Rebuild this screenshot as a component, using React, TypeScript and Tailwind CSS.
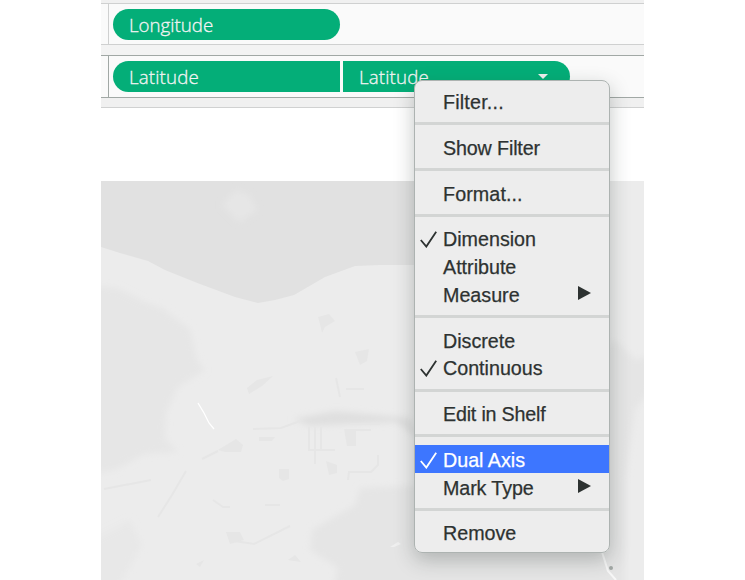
type Item = {
  label: string;
  tracking?: string;
  checked?: boolean;
  submenu?: boolean;
  active?: boolean;
};

const groups: Item[][] = [
  [{ label: 'Filter...', tracking: 'tracking-[0.2px]' }],
  [{ label: 'Show Filter', tracking: 'tracking-[-0.14px]' }],
  [{ label: 'Format...', tracking: 'tracking-[0.1px]' }],
  [
    { label: 'Dimension', checked: true },
    { label: 'Attribute' },
    { label: 'Measure', submenu: true },
  ],
  [{ label: 'Discrete' }, { label: 'Continuous', checked: true }],
  [{ label: 'Edit in Shelf', tracking: 'tracking-[-0.2px]' }],
  [
    { label: 'Dual Axis', checked: true, active: true },
    { label: 'Mark Type', tracking: 'tracking-[-0.1px]', submenu: true },
  ],
  [{ label: 'Remove' }],
];

function MenuRow({ item }: { item: Item }) {
  return (
    <div
      className={`flex h-[27.6px] items-center pl-[5px] pr-[18px] ${
        item.active ? 'bg-[#3d76ff] text-white' : 'text-[#2d3231]'
      }`}
    >
      <div className="w-[23px] shrink-0">
        {item.checked && (
          <svg width="17" height="17" viewBox="0 0 17 17" fill="none" className="mt-[3px]">
            <path d="M0.8 9 L6.3 15.6 L16.2 0.8" stroke="currentColor" strokeWidth="1.8" />
          </svg>
        )}
      </div>
      <span
        className={`grow whitespace-nowrap pt-[3px] text-[19.7px] leading-[27px] [-webkit-text-stroke:0.25px_currentColor] ${item.tracking ?? ''}`}
      >
        {item.label}
      </span>
      {item.submenu && (
        <svg width="13" height="14" viewBox="0 0 13 14" className="mb-px shrink-0">
          <path d="M0 0 L13 7 L0 14 Z" fill="currentColor" />
        </svg>
      )}
    </div>
  );
}

function ContextMenu() {
  return (
    <div className="absolute left-[414px] top-[80px] h-[473px] w-[196px] overflow-hidden rounded-[8px] border border-[#adb3b1] bg-[#ededed] pt-[6px] [font-family:'Liberation_Sans',Arial,sans-serif]">
      {groups.map((group, i) => (
        <div key={i}>
          {i > 0 && (
            <div className="flex h-[18.3px] items-start pt-[7.6px]">
              <div className="h-[3px] w-full bg-[#d3d5d4]" />
            </div>
          )}
          {group.map((item) => (
            <MenuRow key={item.label} item={item} />
          ))}
        </div>
      ))}
    </div>
  );
}

function Map() {
  return (
    <svg width="543" height="399" viewBox="101 181 543 399" className="block">
      <defs>
        <filter id="soft" x="-20%" y="-20%" width="140%" height="140%">
          <feGaussianBlur stdDeviation="3" />
        </filter>
      </defs>
      <rect x="101" y="181" width="543" height="399" fill="#ececec" />
      <path
        d="M101 181 H520 V265 H415 L380 265 L355 266 L325 277 L294 295 L275 300 L258 303 L235 297 L200 284 L165 270 L148 261 L120 253 L101 247 Z"
        fill="#e1e1e1"
      />
      <g filter="url(#soft)">
        <path d="M222 205 L236 190 L249 195 L257 210 L239 222 Z" fill="#e6e6e6" />
        <path
          d="M90 286 L117 288 L145 302 L162 308 L190 329 L197 360 L205 370 L178 387 L166 413 L165 438 L178 452 L145 454 L115 470 L90 474 Z"
          fill="#e6e6e6"
        />
        <path
          d="M430 485 L360 488 L355 505 L312 530 L310 550 L338 568 L333 590 H625 V480 L635 410 L650 390 V355 L636 360 L615 340 Z"
          fill="#e5e5e5"
        />
        <path d="M90 540 L130 520 L142 545 L120 585 H90 Z" fill="#e8e8e8" />
        <path d="M293 419 L335 411 L410 418 L420 440 L396 422 L310 426 Z" fill="#dfdfdf" />
      </g>
      <g fill="#e6e6e6">
        <path d="M318 317 l11 -3 l6 7 l-10 6 l-3 6 l-2 -9z" />
        <path d="M355 352 l14 -3 l-2 12 l-7 4z" />
        <path d="M247 388 l10 -8 l16 -4 l-11 10 l-13 8z" />
        <path d="M259 437 h16 l-3 4 h-13z" />
        <path d="M279 469 h10 v10 l-6 2 l-4 -3z" />
        <path d="M326 461 l11 4 v8 l-8 2z" />
        <path d="M344 429 h12 v17 h-9z" />
        <path d="M218 450 l18 -11 l7 6 l-2 7 h-16z" />
        <path d="M226 532 h14 l4 8 l-14 4z" />
        <path d="M288 560 l7 -5 l6 7z" />
        <path d="M196 564 l8 -4 l-4 7z" />
      </g>
      <g fill="none" stroke="#e6e6e6" strokeWidth="2">
        <path d="M186 471 L172 495 L158 517 M202 459 L218 451 M315 427 V464 M321 427 V449 M253 429 L281 428 L300 421 M336 378 L340 397 M346 389 H364 M213 500 L223 507 H230 M265 505 H280 M234 541 L254 544 L290 526 M378 455 V465 L371 472 H349 L348 480 M104 489 L151 480" />
        <path d="M350 424 H380 M354 430 H371 M309 427 V450 H335" />
      </g>
      <path d="M198 403 L204 413 L209 423 L214 429" fill="none" stroke="#fff" strokeWidth="1.3" />
      <path d="M390 547 L398 542 L401 544 L394 547 Z" fill="#f0f0f0" />
      <path d="M602 552 L608 571 L616 580" fill="none" stroke="#f7f7f7" strokeWidth="2" />
    </svg>
  );
}

function MenuShadow() {
  return (
    <div className="absolute left-[101px] top-0 h-[580px] w-[543px] overflow-hidden">
      <div className="absolute left-[313px] top-[80px] h-[473px] w-[196px] rounded-[8px] shadow-[0_7px_20px_rgba(40,50,45,0.28)]" />
      <div className="absolute left-[508px] top-[566px] size-1 rounded-full bg-[#9fa5a2]" />
    </div>
  );
}

export default function App() {
  return (
    <main className="relative flex h-[580px] w-[745px] justify-start overflow-hidden bg-white pl-[101px]">
      <div className="flex w-[543px] flex-col [font-family:'Open_Sans','Noto_Sans',sans-serif]">
        <div className="h-[3px] bg-[#f0f0f0]" />
        <div className="flex h-[42px] border-y border-[#cfd0d0] bg-[#fafafa]">
          <div className="w-[8px] border-r border-[#cfd0d0]" />
          <div className="ml-[4px] mt-[5px] flex h-[31px] w-[227px] items-center rounded-full bg-[#04ae78] pl-[16px] text-[18.7px] font-light leading-[30px] text-[#f4f4f4] [-webkit-text-stroke:0.3px_currentColor]">
            Longitude
          </div>
        </div>
        <div className="h-[10px] bg-[#f3f3f3]" />
        <div className="flex h-[43px] border-y border-[#a1a8a5] bg-[#fafafa]">
          <div className="w-[8px] border-r border-[#a1a8a5]" />
          <div className="ml-[4px] mt-[5px] flex h-[31px] gap-[3px] text-[18.7px] font-light leading-[30px] tracking-[0.15px] text-[#f4f4f4] [-webkit-text-stroke:0.3px_currentColor]">
            <div className="flex w-[227px] items-center rounded-l-full bg-[#04ae78] pl-[16px]">Latitude</div>
            <div className="flex w-[227px] items-center justify-between rounded-r-full bg-[#04ae78] pl-[16px] pr-[22px]">
              Latitude
              <svg width="10" height="5" viewBox="0 0 10 5">
                <path d="M0 0 H10 L5 5 Z" fill="#f0f0f0" />
              </svg>
            </div>
          </div>
        </div>
        <div className="h-[10px] border-b border-[#d0d1d1] bg-[#f0f0f0]" />
        <div className="h-[73px] shrink-0" />
        <Map />
      </div>
      <MenuShadow />
      <ContextMenu />
    </main>
  );
}
